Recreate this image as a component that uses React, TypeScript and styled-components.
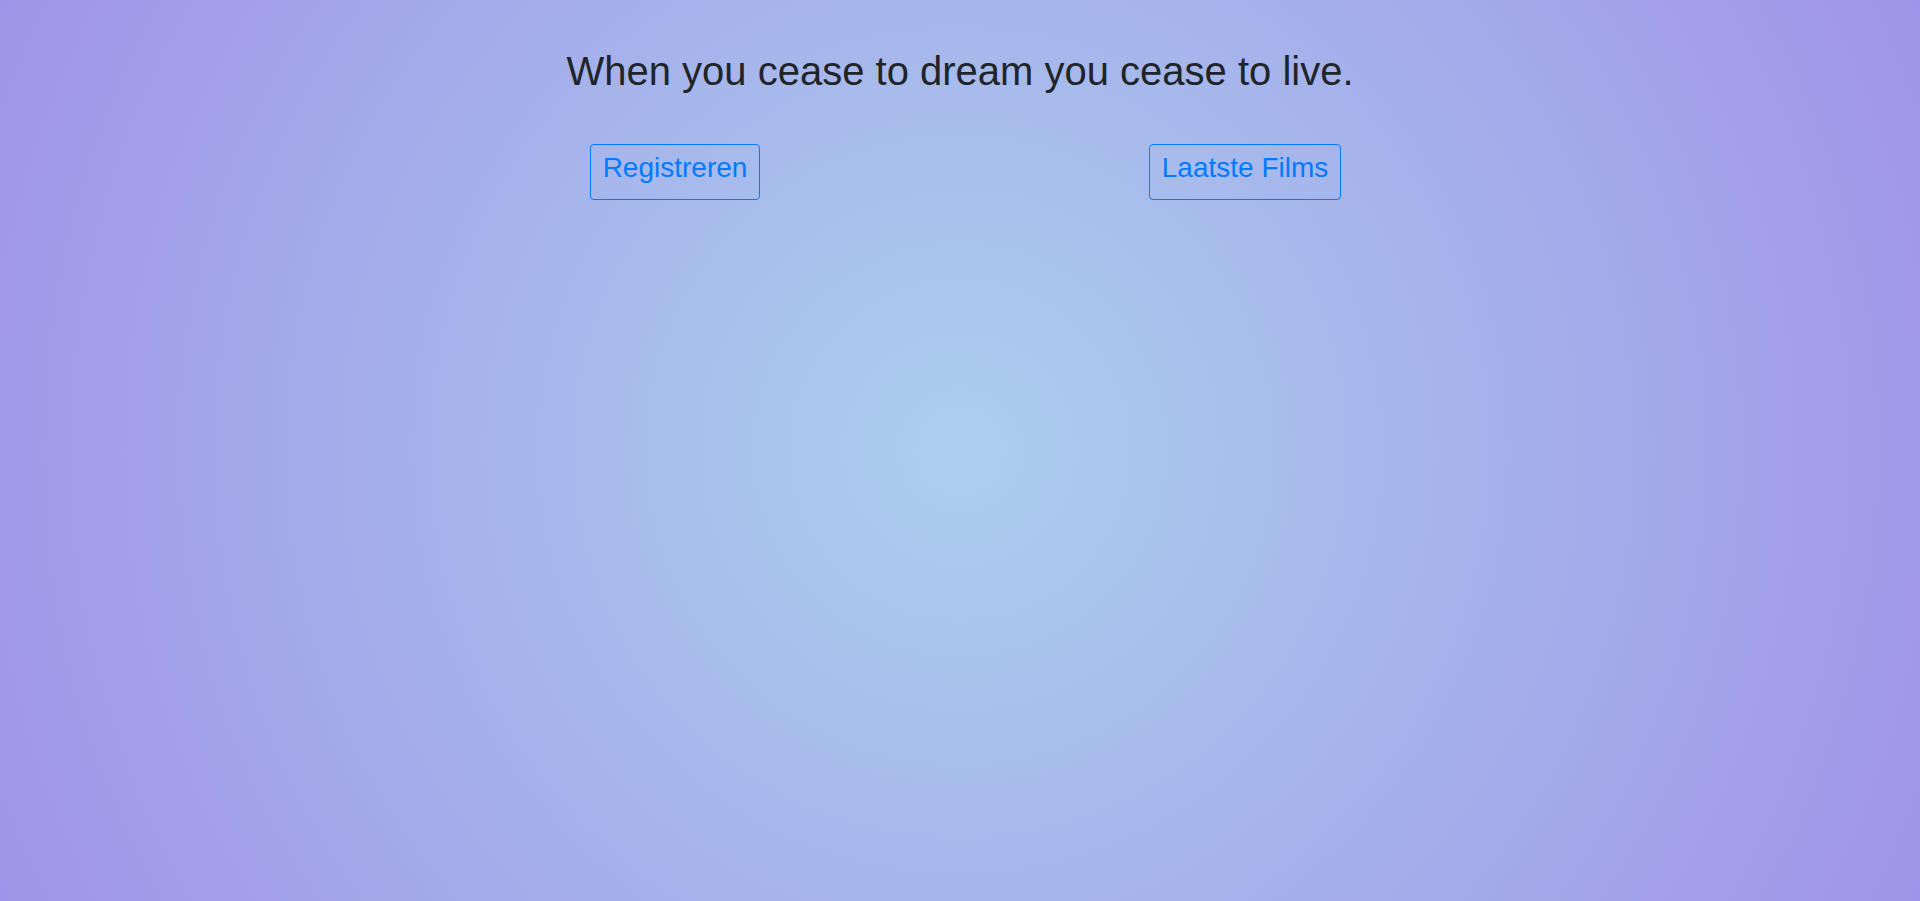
import styled, { createGlobalStyle } from 'styled-components';

const GlobalStyle = createGlobalStyle`
  html, body {
    margin: 0;
    padding: 0;
    height: 100%;
  }

  body {
    font-family: "Liberation Sans", Arial, sans-serif;
    color: #212529;
    background: radial-gradient(circle, #abcfee 0%, #a094e8 100%);
    background-attachment: fixed;
    min-height: 100vh;
  }
`;

const Page = styled.main`
  min-height: 100vh;
  box-sizing: border-box;
  padding-top: 47px;
`;

const Container = styled.div`
  max-width: 1140px;
  margin: 0 auto;
  padding: 0 15px;
  box-sizing: border-box;
`;

const Quote = styled.h1`
  margin: 0 0 49px;
  font-size: 40px;
  font-weight: 400;
  line-height: 48px;
  text-align: center;
`;

const Row = styled.div`
  display: grid;
  grid-template-columns: 1fr 1fr;
  margin: 0 -15px;
`;

const Col = styled.div`
  display: flex;
  justify-content: center;
  align-items: flex-start;
  padding: 0 15px;
`;

const OutlineButton = styled.a`
  display: inline-block;
  box-sizing: border-box;
  padding: 6px 12px;
  color: #007bff;
  text-decoration: none;
  border: 1px solid #007bff;
  border-radius: 4px;
  background: transparent;
  cursor: pointer;

  &:hover {
    color: #fff;
    background: #007bff;
  }
`;

const ButtonLabel = styled.span`
  display: block;
  margin-bottom: 8px;
  font-size: 28px;
  font-weight: 400;
  line-height: 33.6px;
`;

export default function App() {
  return (
    <>
      <GlobalStyle />
      <Page>
        <Container>
          <Quote>When you cease to dream you cease to live.</Quote>
          <Row>
            <Col>
              <OutlineButton href="#">
                <ButtonLabel>Registreren</ButtonLabel>
              </OutlineButton>
            </Col>
            <Col>
              <OutlineButton href="#">
                <ButtonLabel>Laatste Films</ButtonLabel>
              </OutlineButton>
            </Col>
          </Row>
        </Container>
      </Page>
    </>
  );
}
